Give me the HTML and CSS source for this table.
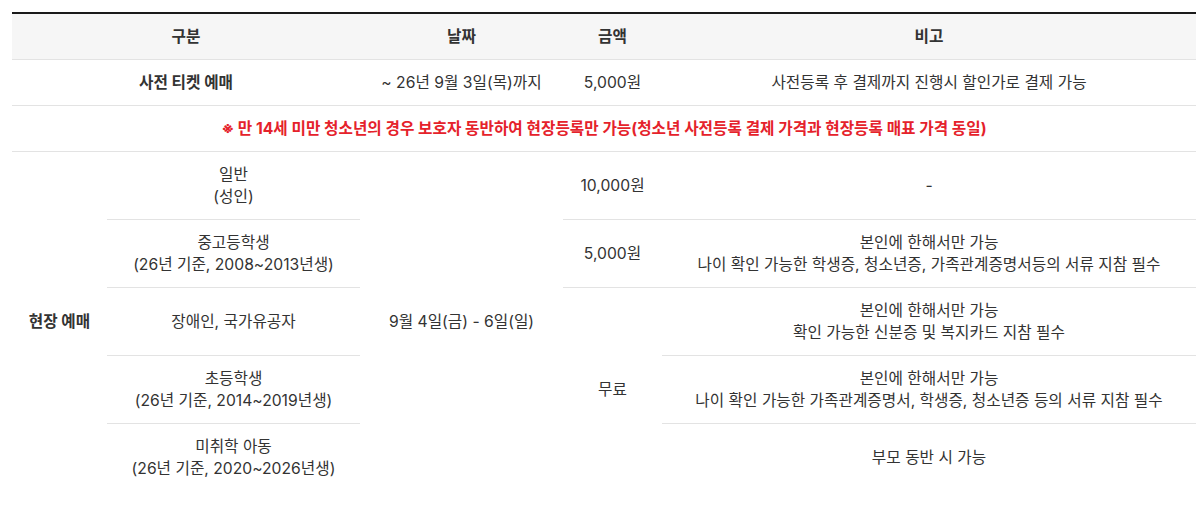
FILE: index.html
```html
<!DOCTYPE html>
<html lang="ko">
<head>
<meta charset="utf-8">
<title>티켓 안내</title>
<link rel="stylesheet" href="styles.css">
</head>
<body>
<div class="wrap">
<table class="price">
  <colgroup>
    <col class="c1"><col class="c2"><col class="c3"><col class="c4"><col class="c5">
  </colgroup>
  <thead>
    <tr>
      <th colspan="2">구분</th>
      <th>날짜</th>
      <th>금액</th>
      <th>비고</th>
    </tr>
  </thead>
  <tbody>
    <tr>
      <td colspan="2" class="strong">사전 티켓 예매</td>
      <td>~ 26년 9월 3일(목)까지</td>
      <td>5,000원</td>
      <td>사전등록 후 결제까지 진행시 할인가로 결제 가능</td>
    </tr>
    <tr>
      <td colspan="5" class="notice">※ 만 14세 미만 청소년의 경우 보호자 동반하여 현장등록만 가능(청소년 사전등록 결제 가격과 현장등록 매표 가격 동일)</td>
    </tr>
    <tr class="tall">
      <td rowspan="5" class="strong nob">현장 예매</td>
      <td>일반<br>(성인)</td>
      <td rowspan="5" class="nob">9월 4일(금) - 6일(일)</td>
      <td>10,000원</td>
      <td>-</td>
    </tr>
    <tr class="tall">
      <td>중고등학생<br>(26년 기준, 2008~2013년생)</td>
      <td>5,000원</td>
      <td>본인에 한해서만 가능<br>나이 확인 가능한 학생증, 청소년증, 가족관계증명서등의 서류 지참 필수</td>
    </tr>
    <tr class="tall">
      <td>장애인, 국가유공자</td>
      <td rowspan="3" class="nob">무료</td>
      <td>본인에 한해서만 가능<br>확인 가능한 신분증 및 복지카드 지참 필수</td>
    </tr>
    <tr class="tall">
      <td>초등학생<br>(26년 기준, 2014~2019년생)</td>
      <td>본인에 한해서만 가능<br>나이 확인 가능한 가족관계증명서, 학생증, 청소년증 등의 서류 지참 필수</td>
    </tr>
    <tr class="tall last">
      <td>미취학 아동<br>(26년 기준, 2020~2026년생)</td>
      <td>부모 동반 시 가능</td>
    </tr>
  </tbody>
</table>
</div>
</body>
</html>
```
FILE: styles.css
```css
html, body {
  margin: 0;
  padding: 0;
  background: #ffffff;
}
body {
  font-family: Inter, "Noto Sans CJK KR", sans-serif;
  font-size: 15.7px;
  color: #333333;
}
.wrap {
  padding: 12px 4px 0 12px;
}
.price {
  width: 1184px;
  border-collapse: collapse;
  table-layout: fixed;
  border-top: 2px solid #1a1a1a;
}
.c1 { width: 95px; }
.c2 { width: 253px; }
.c3 { width: 203px; }
.c4 { width: 99px; }
.c5 { width: 534px; }
.price th,
.price td {
  text-align: center;
  vertical-align: middle;
  line-height: 22px;
  padding: 12px 0 11px;
  border-bottom: 1px solid #e3e3e3;
}
.price th {
  background: #f6f6f6;
  font-weight: 700;
  color: #333333;
}
.strong {
  font-weight: 700;
}
.notice {
  color: #e5222b;
  font-weight: 700;
}
.price td.nob {
  border-bottom: none;
}
.price tr.last td {
  border-bottom: none;
}
```
